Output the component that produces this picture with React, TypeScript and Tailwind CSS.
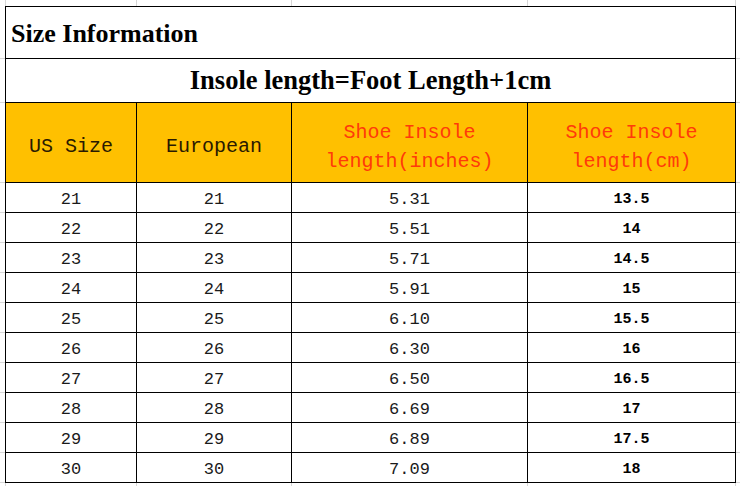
const rows = [
  ["21", "21", "5.31", "13.5"],
  ["22", "22", "5.51", "14"],
  ["23", "23", "5.71", "14.5"],
  ["24", "24", "5.91", "15"],
  ["25", "25", "6.10", "15.5"],
  ["26", "26", "6.30", "16"],
  ["27", "27", "6.50", "16.5"],
  ["28", "28", "6.69", "17"],
  ["29", "29", "6.89", "17.5"],
  ["30", "30", "7.09", "18"],
];

const mono = "font-['Liberation_Mono',monospace]";
const serif = "font-['Liberation_Serif',serif]";

// excel-ish gray grid ticks around the table
const Gutter = ({ width }: { width: string }) => (
  <div className={`flex flex-col ${width}`}>
    <div className="h-[53px] border-b border-[#d6d6d6]" />
    <div className="h-[44px] border-b border-[#d6d6d6]" />
    <div className="h-[80px] border-b border-[#d6d6d6]" />
    {rows.map((r) => (
      <div key={r[0]} className="h-[30px] border-b border-[#d6d6d6]" />
    ))}
  </div>
);

const ColStrip = ({ height }: { height: string }) => (
  <div className={`flex ${height}`}>
    <div className="w-[6px] border-r border-[#d6d6d6]" />
    <div className="w-[131px] border-r border-[#d6d6d6]" />
    <div className="w-[155px] border-r border-[#d6d6d6]" />
    <div className="w-[236px] border-r border-[#d6d6d6]" />
    <div className="w-[208px] border-r border-[#d6d6d6]" />
  </div>
);

const App = () => {
  return (
    <div className="w-[740px] h-[486px] bg-white overflow-hidden text-black">
      <ColStrip height="h-[6px]" />
      <div className="flex">
        <Gutter width="w-[5px]" />
        <div className="w-[731px] border-t border-l border-black">
          {/* TITLE */}
          <div
            className={`h-[52px] border-r border-b border-black flex items-center pl-[5px] pt-[2px] ${serif} font-bold text-[26px]`}
          >
            Size Information
          </div>
          <div
            className={`h-[44px] border-r border-b border-black flex items-center justify-center pt-[1px] ${serif} font-bold text-[26.5px]`}
          >
            Insole length=Foot Length+1cm
          </div>
          {/* HEADER */}
          <div className={`flex h-[80px] bg-[#ffc000] ${mono} text-[20px] leading-[29px]`}>
            <div className="w-[131px] border-r border-b border-black flex items-center justify-center pt-[8px] text-[#2a1a00]">
              US Size
            </div>
            <div className="w-[155px] border-r border-b border-black flex items-center justify-center pt-[8px] text-[#2a1a00]">
              European
            </div>
            <div className="w-[236px] border-r border-b border-black flex flex-col items-center justify-center pt-[8px] text-[#ff3a0a]">
              <span>Shoe Insole</span>
              <span>length(inches)</span>
            </div>
            <div className="w-[208px] border-r border-b border-black flex flex-col items-center justify-center pt-[8px] text-[#ff3a0a]">
              <span>Shoe Insole</span>
              <span>length(cm)</span>
            </div>
          </div>
          {/* ROWS */}
          {rows.map((r) => (
            <div key={r[0]} className={`flex h-[30px] ${mono} text-[17px] text-[#1a1a1a]`}>
              <div className="w-[131px] border-r border-b border-black flex items-center justify-center pt-[5px]">
                {r[0]}
              </div>
              <div className="w-[155px] border-r border-b border-black flex items-center justify-center pt-[5px]">
                {r[1]}
              </div>
              <div className="w-[236px] border-r border-b border-black flex items-center justify-center pt-[5px]">
                {r[2]}
              </div>
              <div className="w-[208px] border-r border-b border-black flex items-center justify-center pt-[5px] font-bold text-[15px] text-black">
                {r[3]}
              </div>
            </div>
          ))}
        </div>
        <Gutter width="w-[4px]" />
      </div>
      <ColStrip height="h-[4px]" />
    </div>
  );
};

export default App;
